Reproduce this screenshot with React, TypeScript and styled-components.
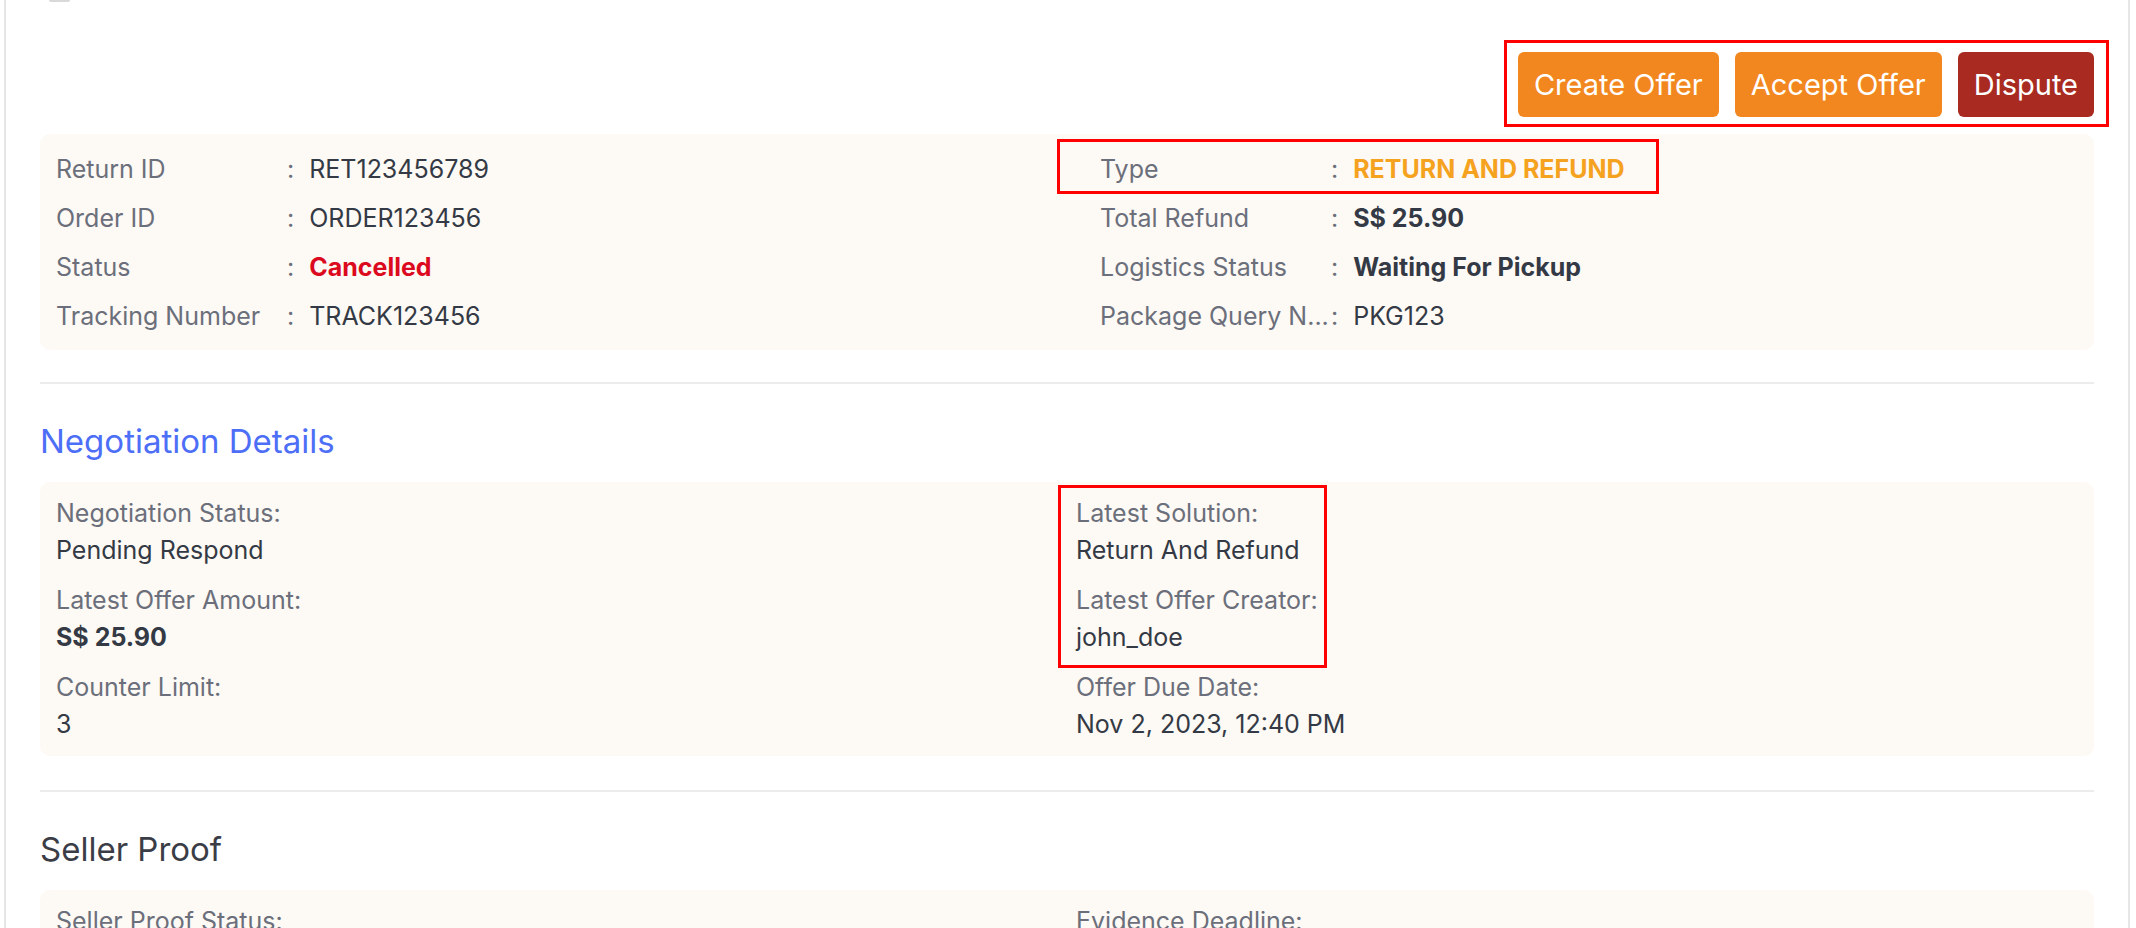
import React from 'react'
import styled, { createGlobalStyle, css } from 'styled-components'

const GlobalStyle = createGlobalStyle`
	html, body {
		margin: 0;
		padding: 0;
		background: #ffffff;
	}
	body {
		font-family: Inter, "Noto Sans", sans-serif;
		color: #343a45;
	}
	* {
		box-sizing: border-box;
	}
`

const Panel = styled.div`
	margin-left: 4px;
	width: 2126px;
	min-height: 100vh;
	padding: 0 34px;
	border-left: 2px solid #e6e6e6;
	border-right: 2px solid #e6e6e6;
	background: #ffffff;
`

const TopStub = styled.div`
	width: 21px;
	height: 2px;
	margin-left: 9px;
	background: #d9d9d9;
	border-radius: 0 0 2px 2px;
`

const Toolbar = styled.div`
	display: flex;
	justify-content: flex-end;
	margin-top: 50px;
`

const ButtonGroup = styled.div`
	position: relative;
	display: flex;
	gap: 16px;
`

const tones = {
	orange: '#f28720',
	danger: '#a82a21',
}

const ActionButton = styled.button<{ $tone: keyof typeof tones }>`
	height: 65px;
	padding: 0 16px;
	border: none;
	border-radius: 6px;
	background: ${(p) => tones[p.$tone]};
	color: #ffffff;
	font-family: Inter, "Noto Sans", sans-serif;
	font-size: 29px;
	font-weight: 400;
	line-height: 1;
	cursor: pointer;
`

// red annotation frame drawn over the content
const Highlight = styled.span<{ $inset: string; $width?: string }>`
	position: absolute;
	inset: ${(p) => p.$inset};
	${(p) =>
		p.$width &&
		css`
			width: ${p.$width};
		`}
	border: 3px solid #ff0000;
	pointer-events: none;
`

const Card = styled.div<{ $split: string; $pad: string }>`
	display: grid;
	grid-template-columns: ${(p) => p.$split} 1fr;
	padding: ${(p) => p.$pad};
	background: #fdf9f4;
	border-radius: 10px;
`

const Column = styled.div<{ $gap?: number }>`
	display: flex;
	flex-direction: column;
	gap: ${(p) => p.$gap || 0}px;
`

const InfoRow = styled.div`
	position: relative;
	display: flex;
	align-items: center;
	height: 49px;
	font-size: 25px;
`

const RowLabel = styled.span`
	flex: 0 0 231px;
	white-space: nowrap;
	color: #6b6f7b;
`

const Colon = styled.span`
	padding-right: 15px;
	color: #6b6f7b;
`

const valueTones = {
	plain: '#343a45',
	strong: '#343a45',
	danger: '#dc0a1e',
	warning: '#f5a21f',
}

const Value = styled.span<{ $tone?: keyof typeof valueTones }>`
	color: ${(p) => valueTones[p.$tone || 'plain']};
	font-weight: ${(p) => (p.$tone && p.$tone !== 'plain' ? 700 : 400)};
	white-space: nowrap;
`

const Divider = styled.hr<{ $top: number }>`
	margin: ${(p) => p.$top}px 0 0;
	border: none;
	border-top: 2px solid #ececec;
`

const SectionTitle = styled.h2<{ $accent?: boolean }>`
	margin: 37px 0 21px;
	font-size: 33px;
	font-weight: 400;
	line-height: 40px;
	color: ${(p) => (p.$accent ? '#4d6ef6' : '#3b3d46')};
`

const FieldGroup = styled.div`
	position: relative;
	display: flex;
	flex-direction: column;
	gap: 13px;
`

const Field = styled.div`
	display: flex;
	flex-direction: column;
	font-size: 25px;
	line-height: 37px;
`

const FieldLabel = styled.span`
	color: #6b6f7b;
`

type Tone = keyof typeof valueTones

type Item = { label: string; value: string; tone?: Tone }

const returnLeft: Item[] = [
	{ label: 'Return ID', value: 'RET123456789' },
	{ label: 'Order ID', value: 'ORDER123456' },
	{ label: 'Status', value: 'Cancelled', tone: 'danger' },
	{ label: 'Tracking Number', value: 'TRACK123456' },
]

const returnRight: Item[] = [
	{ label: 'Type', value: 'RETURN AND REFUND', tone: 'warning' },
	{ label: 'Total Refund', value: 'S$ 25.90', tone: 'strong' },
	{ label: 'Logistics Status', value: 'Waiting For Pickup', tone: 'strong' },
	{ label: 'Package Query N...', value: 'PKG123' },
]

const negotiationLeft: Item[] = [
	{ label: 'Negotiation Status:', value: 'Pending Respond' },
	{ label: 'Latest Offer Amount:', value: 'S$ 25.90', tone: 'strong' },
	{ label: 'Counter Limit:', value: '3' },
]

const negotiationRight: Item[] = [
	{ label: 'Latest Solution:', value: 'Return And Refund' },
	{ label: 'Latest Offer Creator:', value: 'john_doe' },
	{ label: 'Offer Due Date:', value: 'Nov 2, 2023, 12:40 PM' },
]

const sellerLeft: Item[] = [
	{ label: 'Seller Proof Status:', value: 'Pending Upload' },
	{ label: 'Seller Evidence:', value: '-' },
]

const sellerRight: Item[] = [
	{ label: 'Evidence Deadline:', value: 'Nov 5, 2023, 12:40 PM' },
	{ label: 'Seller Remarks:', value: '-' },
]

const Row = ({ item, children }: { item: Item; children?: React.ReactNode }) => (
	<InfoRow>
		{children}
		<RowLabel>{item.label}</RowLabel>
		<Colon>:</Colon>
		<Value $tone={item.tone}>{item.value}</Value>
	</InfoRow>
)

const FieldItem = ({ item }: { item: Item }) => (
	<Field>
		<FieldLabel>{item.label}</FieldLabel>
		<Value $tone={item.tone}>{item.value}</Value>
	</Field>
)

export default function App() {
	return (
		<>
			<GlobalStyle />
			<Panel>
				<TopStub />
				<Toolbar>
					<ButtonGroup>
						<Highlight $inset="-12px -15px -10px -14px" />
						<ActionButton $tone="orange">Create Offer</ActionButton>
						<ActionButton $tone="orange">Accept Offer</ActionButton>
						<ActionButton $tone="danger">Dispute</ActionButton>
					</ButtonGroup>
				</Toolbar>

				<Card $split="1044px" $pad="10px 16px" style={{ marginTop: 17 }}>
					<Column>
						{returnLeft.map((item) => (
							<Row key={item.label} item={item} />
						))}
					</Column>
					<Column>
						{returnRight.map((item, index) => (
							<Row key={item.label} item={item}>
								{index === 0 && (
									<Highlight $inset="-5px auto -1px -43px" $width="602px" />
								)}
							</Row>
						))}
					</Column>
				</Card>

				<Divider $top={32} />
				<SectionTitle $accent>Negotiation Details</SectionTitle>
				<Card $split="1020px" $pad="13px 16px">
					<Column $gap={13}>
						{negotiationLeft.map((item) => (
							<FieldItem key={item.label} item={item} />
						))}
					</Column>
					<Column $gap={13}>
						<FieldGroup>
							<Highlight $inset="-10px auto -12px -18px" $width="269px" />
							{negotiationRight.slice(0, 2).map((item) => (
								<FieldItem key={item.label} item={item} />
							))}
						</FieldGroup>
						<FieldItem item={negotiationRight[2]} />
					</Column>
				</Card>

				<Divider $top={34} />
				<SectionTitle>Seller Proof</SectionTitle>
				<Card $split="1020px" $pad="13px 16px">
					<Column $gap={13}>
						{sellerLeft.map((item) => (
							<FieldItem key={item.label} item={item} />
						))}
					</Column>
					<Column $gap={13}>
						{sellerRight.map((item) => (
							<FieldItem key={item.label} item={item} />
						))}
					</Column>
				</Card>
			</Panel>
		</>
	)
}
